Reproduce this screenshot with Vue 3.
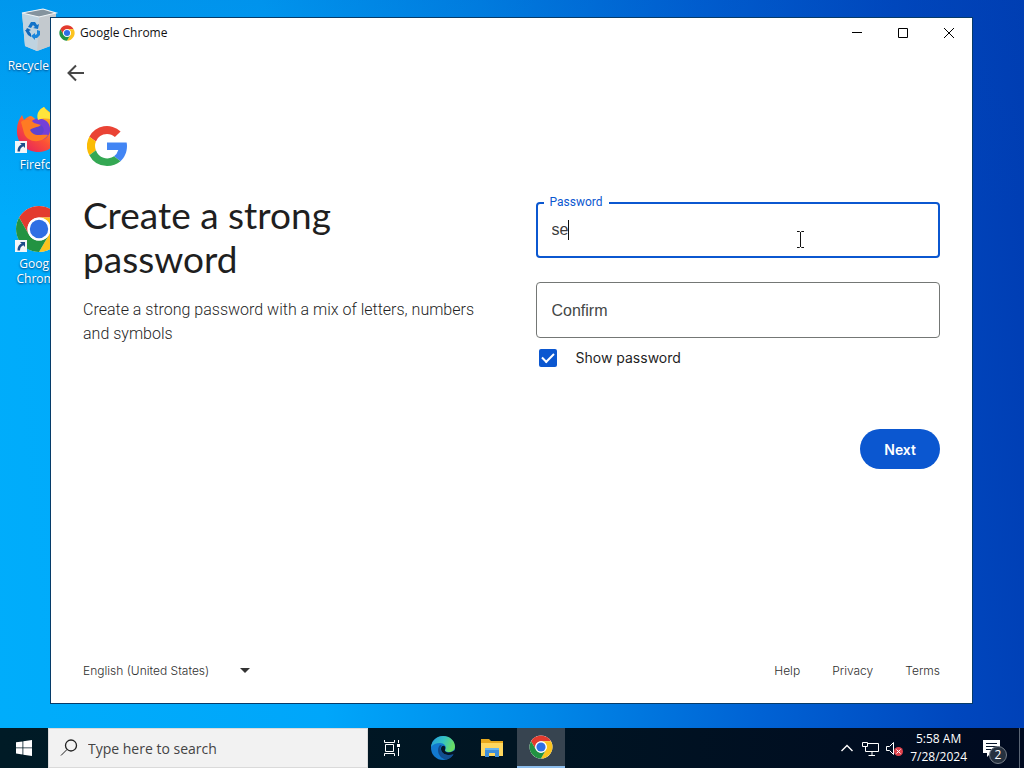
<script setup>
import { ref } from 'vue'

const password = ref('se')
const confirm = ref('')
const showPassword = ref(true)
const language = ref('en-US')
const links = ['Help', 'Privacy', 'Terms']
</script>

<template>
  <div class="screen">
    <svg class="defs" aria-hidden="true">
      <symbol id="chrome" viewBox="0 0 48 48">
        <circle cx="24" cy="24" r="23" fill="#fff" />
        <path d="M4.1 12.5A23 23 0 0 1 43.9 12.5H24A11.5 11.5 0 0 0 14 29.7Z" fill="#e33b2e" />
        <path d="M43.9 12.5A23 23 0 0 1 24 47L34 29.7A11.5 11.5 0 0 0 24 12.5Z" fill="#fcc31e" />
        <path d="M24 47A23 23 0 0 1 4.1 12.5L14 29.7A11.5 11.5 0 0 0 34 29.7Z" fill="#229342" />
        <circle cx="24" cy="24" r="11.5" fill="#fff" />
        <circle cx="24" cy="24" r="9.2" fill="#2f6fe4" />
      </symbol>
      <symbol id="shortcut" viewBox="0 0 12 12">
        <path d="M0 0h12v12H0z" fill="#f4f6f8" />
        <path d="M5 2h5v5L8.300 5.300C6 6.500 5 8 5 10.500H2.500C2.400 7 4 4.800 6.600 3.600Z" fill="#1d4c8a" />
      </symbol>
    </svg>

    <main class="desktop">
      <nav class="shortcuts" aria-label="Desktop">
        <a class="shortcut" href="#">
          <span class="art">
            <svg width="44" height="46" viewBox="0 0 44 46">
              <path d="M5 6L26 2L39 6L36 38L20 44L8 39Z" fill="#d5dbe0" />
              <path d="M5 6L22 10L20 44L8 39Z" fill="#bfd3e0" />
              <path d="M22 10L39 6L36 38L20 44Z" fill="#c3c9ce" />
              <path d="M5 6L26 2L39 6L22 10Z" fill="#84939e" stroke="#eef3f6" stroke-width="1.200" />
              <path d="M11 20L14 15H18L20 18L22 17L21 22L16 21L18 20L16 18L14 21Z" fill="#1272c8" />
              <path d="M20 23L23 24L23 28L20 31H18V33L14 29L18 26V28L20 27Z" fill="#1a86dc" />
              <path d="M10 21L14 23L12 24L14 27V30L11 28L8 23L9 23Z" fill="#0f67ba" />
            </svg>
          </span>
          <span>Recycle Bin</span>
        </a>
        <a class="shortcut" href="#">
          <span class="art">
            <svg width="48" height="48" viewBox="0 0 48 48">
              <defs>
                <linearGradient id="fox" x1="1" y1="0" x2="0.200" y2="1">
                  <stop offset="0" stop-color="#ffe92f" />
                  <stop offset="0.350" stop-color="#ff9a24" />
                  <stop offset="0.650" stop-color="#fb5136" />
                  <stop offset="1" stop-color="#e5225e" />
                </linearGradient>
              </defs>
              <path d="M29 1C32 5 40 8 44 18C48 31 38 46 24 46C10 46 1 36 2 23C2 18 4 13 7 9L9 14C11 12 14 10 16 10C19 11 20 14 24 14C22 9 24 4 29 1Z" fill="url(#fox)" />
              <path d="M14 23C14 15 20 11 27 13C36 15 38 27 31 32C24 37 14 33 14 23Z" fill="#7440d9" />
              <path d="M6 16C10 12 17 14 19 17L26 19C25 23 19 22 17 26C22 31 29 28 33 29C27 38 12 37 9 27Z" fill="#ff7b23" />
              <path d="M15 24C18 21 22 22 26 19C30 22 30 28 24 29C20 29 17 28 15 24Z" fill="#5f43cf" />
              <path d="M23 14C21 8 24 3 29 1C31 5 39 9 43 18C38 13 31 11 23 14Z" fill="#ffe53b" />
            </svg>
            <svg class="badge" width="12" height="12"><use href="#shortcut" /></svg>
          </span>
          <span>Firefox</span>
        </a>
        <a class="shortcut" href="#">
          <span class="art">
            <svg width="48" height="48"><use href="#chrome" /></svg>
            <svg class="badge" width="12" height="12"><use href="#shortcut" /></svg>
          </span>
          <span>Google Chrome</span>
        </a>
      </nav>

      <section class="window">
        <header class="titlebar">
          <svg width="16" height="16"><use href="#chrome" /></svg>
          <span class="title">Google Chrome</span>
          <button class="caption" aria-label="Minimize">
            <svg width="12" height="12"><path d="M1 5.500H11" /></svg>
          </button>
          <button class="caption" aria-label="Maximize">
            <svg width="12" height="12"><path d="M1.500 1.500H10.500V10.500H1.500Z" /></svg>
          </button>
          <button class="caption" aria-label="Close">
            <svg width="12" height="12"><path d="M1 1L11 11M11 1L1 11" /></svg>
          </button>
        </header>

        <button class="back" aria-label="Back">
          <svg width="20" height="20" viewBox="0 0 20 20"><path d="M18 10H3M10 2.500L2.500 10L10 17.500" /></svg>
        </button>

        <form class="content" @submit.prevent>
          <div class="intro">
            <svg class="google" width="40" height="40" viewBox="4 4 40 40">
              <path fill="#4285f4" d="M43.600 20.500H24v7.500h11.300a12 12 0 0 1-4.300 6.300l6.500 5C41.500 35.600 44 30.300 44 24c0-1.200-.1-2.400-.4-3.500z" />
              <path fill="#ea4335" d="M6.300 14.700l6.600 4.800A12 12 0 0 1 24 12c3.100 0 5.800 1.200 7.900 3.100l5.700-5.700A20 20 0 0 0 6.300 14.700z" />
              <path fill="#fbbc05" d="M6.300 14.700A20 20 0 0 0 6.300 33.300l6.600-5a12 12 0 0 1 0-8.800z" />
              <path fill="#34a853" d="M24 44c5.400 0 9.900-1.800 13.500-4.700l-6.500-5A12 12 0 0 1 12.900 28.300l-6.600 5A20 20 0 0 0 24 44z" />
            </svg>
            <h1>Create a strong password</h1>
            <p>Create a strong password with a mix of letters, numbers and symbols</p>
          </div>

          <div class="fields">
            <div class="field">
              <input id="password" v-model="password" :type="showPassword ? 'text' : 'password'" />
              <label for="password">Password</label>
              <i class="caret"></i>
              <svg class="pointer" width="9" height="17" viewBox="0 0 9 17">
                <path d="M1 .5H3.500L4.500 1.500L5.500 .5H8M4.500 1V16M1 16.500H3.500L4.500 15.500L5.500 16.500H8" />
              </svg>
            </div>
            <input v-model="confirm" class="confirm" :type="showPassword ? 'text' : 'password'" placeholder="Confirm" aria-label="Confirm" />
            <label class="show">
              <input v-model="showPassword" type="checkbox" />
              <span>Show password</span>
            </label>
            <button class="next">Next</button>
          </div>
        </form>

        <footer class="footer">
          <span class="language">
            <select v-model="language" aria-label="Language">
              <option value="en-US">English (United States)</option>
            </select>
            <svg width="10" height="5" viewBox="0 0 10 5"><path d="M0 0H10L5 5Z" /></svg>
          </span>
          <nav class="links">
            <a v-for="link in links" :key="link" href="#">{{ link }}</a>
          </nav>
        </footer>
      </section>
    </main>

    <div class="taskbar">
      <button class="start" aria-label="Start">
        <svg width="16" height="16" viewBox="0 0 16 16">
          <path d="M0 2.300L6.500 1.400V7.500H0ZM7.300 1.300L16 0V7.500H7.300ZM0 8.300H6.500V14.500L0 13.600ZM7.300 8.300H16V16L7.300 14.700Z" fill="#fff" />
        </svg>
      </button>
      <label class="search">
        <svg width="18" height="18" viewBox="0 0 18 18">
          <circle cx="11" cy="6.500" r="5.500" />
          <path d="M7 10.500L1 16.500" />
        </svg>
        <input type="text" placeholder="Type here to search" aria-label="Type here to search" />
      </label>
      <button class="task view" aria-label="Task View">
        <svg width="18" height="18" viewBox="0 0 18 18" fill="none" stroke="#fff">
          <path d="M1.500 1V3.500H11.500V1M1.500 17V14.500H11.500V17M2.500 5.500H10.500V12.500H2.500ZM15.500 1V4M15.500 9V17" />
          <path d="M14 5H17V8H14Z" fill="#fff" stroke="none" />
        </svg>
      </button>
      <button class="task" aria-label="Microsoft Edge">
        <svg width="24" height="24" viewBox="0 0 24 24">
          <defs>
            <linearGradient id="edge-top" x1="0" x2="1" y1="0" y2="0.300">
              <stop offset="0" stop-color="#239bdc" />
              <stop offset="0.550" stop-color="#35c2c3" />
              <stop offset="1" stop-color="#68dc65" />
            </linearGradient>
          </defs>
          <circle cx="12" cy="12" r="12" fill="#1279cf" />
          <path d="M0 11C1 4 6 0 12 0C19 0 24 5 24 10.500C24 14 21.500 16 18 16C15 16 13.500 15 14.500 13.500C16 10 13 7 9 7C5 7 2 8.500 0 11Z" fill="url(#edge-top)" />
          <path d="M9 9C5 13 7 22 15 23.500C19 23 21.500 20.500 22.500 18C16 21 9.500 18 9.500 12.500C9.500 11 10 10 11 9.500Z" fill="#114a8b" />
          <path d="M14 10.500C15 13 13 14 14.500 15.500C16.500 17.300 21 16.500 24 14V18C17 21 10 18 10 13C10 10 12.500 9 14 10.500Z" fill="#061525" />
          <path d="M10 13C10 18 16 20.500 22.500 18C20 22 17 23 15 23.500C10 22 7 17 10 13Z" fill="#124f91" />
        </svg>
      </button>
      <button class="task" aria-label="File Explorer">
        <svg width="22" height="18" viewBox="0 0 22 18">
          <path d="M0 0H8L10 2H22V17H0Z" fill="#e8a91d" />
          <path d="M0 4H22V17H0Z" fill="#ffd75e" />
          <path d="M4 9H18V18H14V14H8V18H4Z" fill="#3e8eda" />
          <path d="M4 9H18V11H4Z" fill="#69b5ed" />
        </svg>
      </button>
      <button class="task active" aria-label="Google Chrome">
        <svg width="24" height="24"><use href="#chrome" /></svg>
      </button>

      <div class="tray">
        <button class="more" aria-label="Show hidden icons">
          <svg width="12" height="8" viewBox="0 0 12 8"><path d="M.5 7L6 1.500L11.500 7" stroke-width="1.400" /></svg>
        </button>
        <button aria-label="Network">
          <svg width="17" height="15" viewBox="0 0 17 15"><path d="M6 2.500H16.500V10.500H3.500V6M10 10.500V14M6.500 14.500H13M.5 1.500H5.500V5.500H.5Z" /></svg>
        </button>
        <button aria-label="Volume muted">
          <svg width="17" height="15" viewBox="0 0 17 15">
            <path d="M.5 5.500H3.500L7.500 1.500V13.500L3.500 9.500H.5Z" />
            <circle cx="12.500" cy="10.500" r="4.500" fill="#e0424c" stroke="none" />
            <path d="M10.500 8.500L14.500 12.500M14.500 8.500L10.500 12.500" />
          </svg>
        </button>
        <div class="clock"><span>5:58 AM</span><span>7/28/2024</span></div>
        <button class="notifications" aria-label="2 notifications">
          <svg width="17" height="17" viewBox="0 0 17 17">
            <path d="M0 0H17V13H8L4 17V13H0Z" fill="#fff" stroke="none" />
            <path d="M3 3.500H14M3 6.500H14M3 9.500H10" class="lines" />
          </svg>
          <span class="count">2</span>
        </button>
        <i class="peek"></i>
      </div>
    </div>
  </div>
</template>

<style>
body {
  margin: 0;
}
</style>

<style scoped>
.screen {
  display: flex;
  flex-direction: column;
  min-height: 100vh;
  font-family: "Open Sans", "Noto Sans", sans-serif;
  font-size: 12px;
}

.defs {
  position: absolute;
  width: 0;
  height: 0;
}

button {
  display: flex;
  align-items: center;
  justify-content: center;
  padding: 0;
  border: 0;
  background: none;
  font: inherit;
  color: inherit;
}

input,
select {
  box-sizing: border-box;
  margin: 0;
  outline: none;
  font: inherit;
}

a {
  color: inherit;
  text-decoration: none;
}

.desktop {
  position: relative;
  display: flex;
  flex: 1;
  background:
    linear-gradient(to bottom, rgba(0, 70, 180, 0.2), rgba(0, 140, 255, 0) 30%),
    linear-gradient(85deg, #00adfb 0%, #00a6fa 30%, #0088e8 50%, #0062d4 70%, #0047be 88%, #003cb2 100%);
}

.shortcuts {
  display: flex;
  flex-direction: column;
  gap: 16px;
  width: 78px;
  padding-top: 7px;
}

.shortcut {
  display: flex;
  flex-direction: column;
  align-items: center;
  min-height: 83px;
  color: #fff;
  line-height: 15px;
  text-align: center;
  text-shadow: 0 1px 2px #003c78;
}

.art {
  position: relative;
  height: 51px;
}

.badge {
  position: absolute;
  bottom: 4px;
  left: 0;
}

.window {
  position: absolute;
  inset: 17px 51px 24px 50px;
  box-sizing: border-box;
  display: flex;
  flex-direction: column;
  border: 1px solid #063b69;
  background: #fff;
}

.titlebar {
  display: flex;
  align-items: center;
  height: 29px;
  padding-left: 8px;
  color: #111;
}

.title {
  flex: 1;
  padding-left: 5px;
}

.caption {
  width: 46px;
  height: 29px;
}

.caption svg {
  fill: none;
  stroke: #000;
}

.back {
  width: 50px;
  height: 51px;
}

.back svg {
  fill: none;
  stroke: #474747;
  stroke-width: 2;
}

.content {
  display: grid;
  grid-template-columns: 1fr 1fr;
  gap: 48px;
  flex: 1;
  padding: 28px 32px 0;
  color: #1f1f1f;
}

.google {
  display: block;
  margin-left: 4px;
}

h1 {
  margin: 27px 96px 0 0;
  font: 400 37px/44px Lato, sans-serif;
}

p {
  margin: 17px 0 0;
  font: 300 16px/24px Roboto, sans-serif;
}

.fields {
  display: flex;
  flex-direction: column;
  padding-top: 76px;
}

.field {
  position: relative;
}

.field input,
.confirm {
  display: block;
  width: 100%;
  height: 56px;
  padding: 0 15px;
  border: 1px solid #747775;
  border-radius: 4px;
  background: #fff;
  color: #3c3c3c;
  font: 16px "Liberation Sans", sans-serif;
}

.field input {
  padding: 0 14px;
  border: 2px solid #0b57d0;
}

.field label {
  position: absolute;
  top: -8px;
  left: 8px;
  padding: 0 6px;
  background: #fff;
  color: #0b57d0;
  font: 12px/16px Roboto, sans-serif;
}

.caret {
  position: absolute;
  top: 18px;
  left: 32px;
  width: 1px;
  height: 20px;
  background: #111;
}

.pointer {
  position: absolute;
  top: 29px;
  right: 135px;
  fill: none;
  stroke: #111;
}

.confirm {
  margin-top: 24px;
  padding-top: 2px;
}

.confirm::placeholder {
  color: #444746;
}

.show {
  display: flex;
  align-items: center;
  gap: 19px;
  height: 40px;
  padding-left: 3px;
  font: 14px/20px Inter, sans-serif;
}

.show input {
  width: 18px;
  height: 18px;
  appearance: none;
  border-radius: 2px;
  background: #0b57d0;
}

.show input:checked::before {
  content: "";
  display: block;
  width: 10px;
  height: 5px;
  margin: 4px 0 0 3px;
  border: solid #fff;
  border-width: 0 0 2px 2px;
  transform: rotate(-45deg);
}

.next {
  align-self: flex-end;
  margin-top: 51px;
  padding: 0 24px;
  height: 40px;
  border-radius: 20px;
  background: #0b57d0;
  color: #fff;
  font: 600 14px Inter, sans-serif;
}

.footer {
  display: flex;
  align-items: center;
  justify-content: space-between;
  height: 20px;
  padding: 0 32px 23px;
  color: #303030;
  font: 300 12px Inter, sans-serif;
}

.language {
  display: flex;
  align-items: center;
}

.language select {
  width: 157px;
  padding: 0;
  appearance: none;
  border: 0;
  background: none;
  color: inherit;
}

.language svg {
  fill: #333;
}

.links {
  display: flex;
  gap: 32px;
}

.taskbar {
  display: flex;
  height: 40px;
  background: linear-gradient(90deg, #001b26, #001523 50%, #000a20);
  color: #fff;
}

.start,
.task {
  width: 48px;
}

.search {
  display: flex;
  align-items: center;
  gap: 10px;
  box-sizing: border-box;
  width: 320px;
  padding: 0 11px;
  border: 1px solid #dadada;
  background: #f2f2f2;
}

.search svg {
  fill: none;
  stroke: #222;
}

.search svg circle {
  stroke-width: 1.3px;
}

.search input {
  flex: 1;
  min-width: 0;
  padding: 0;
  border: 0;
  background: none;
  font-size: 14px;
}

.search input::placeholder {
  color: #444;
}

.task {
  margin-right: 1px;
}

.view {
  margin-right: 3px;
}

.active {
  box-sizing: border-box;
  border-bottom: 2px solid #8cbdec;
  background: #374450;
}

.tray {
  display: flex;
  align-items: center;
  gap: 7px;
  margin-left: auto;
}

.tray svg {
  fill: none;
  stroke: #fff;
}

.more {
  margin-right: 2px;
}

.clock {
  display: flex;
  flex-direction: column;
  align-items: center;
  line-height: 18px;
}

.notifications {
  position: relative;
  width: 34px;
}

.notifications .lines {
  stroke: #07162a;
}

.count {
  position: absolute;
  top: 6px;
  right: 1px;
  width: 16px;
  border: 1px solid #777e88;
  border-radius: 50%;
  background: #26313f;
  line-height: 16px;
}

.peek {
  width: 4px;
  height: 40px;
  margin-left: 4px;
  border-left: 1px solid #5b6575;
}
</style>
